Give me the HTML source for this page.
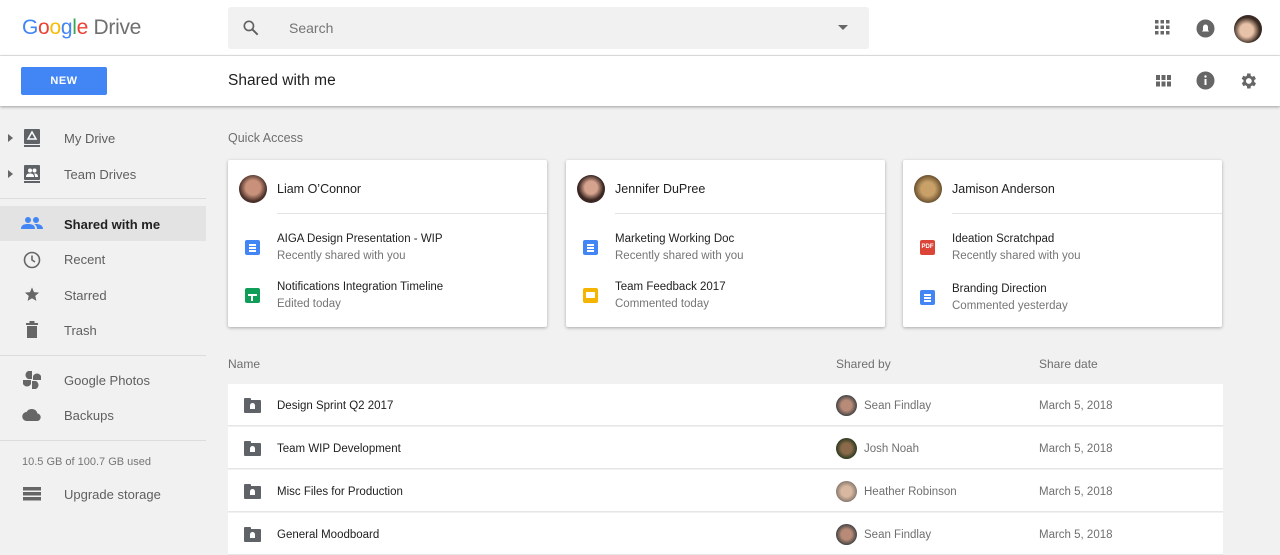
<!DOCTYPE html>
<html><head><meta charset="utf-8"><style>
*{box-sizing:border-box;margin:0;padding:0}
body{width:1280px;height:548px;overflow:hidden;background:#f1f1f1;font-family:"Liberation Sans",Arial,sans-serif;position:relative;color:#212121}
.abs{position:absolute}
.top{left:0;top:0;width:1280px;height:56px;background:#fff;border-bottom:1px solid #e6e6e6}
.sub{left:0;top:56px;width:1280px;height:50px;background:#fff;box-shadow:0 1px 3px rgba(0,0,0,.35)}
.nav{left:64px;font-size:13px;color:#5f5f5f}
.div{left:0;width:206px;height:1px;background:#dcdcdc}
.card{background:#fff;width:319px;height:167px;top:160px;box-shadow:0 1px 3px rgba(0,0,0,.3);border-radius:2px}
.card .av{position:absolute;left:11px;top:15px;width:28px;height:28px;border-radius:50%}
.card .nm{position:absolute;left:49px;top:22px;font-size:12.5px;color:#212121}
.card .ln{position:absolute;left:49px;right:0;top:53px;height:1px;background:#e3e3e3}
.card .t{position:absolute;left:49px;font-size:11.5px;color:#212121}
.card .s{position:absolute;left:49px;font-size:11.5px;color:#757575}
.card .fi{position:absolute;left:17px;width:15px;height:15px;border-radius:2px}
.doc:after{content:"";position:absolute;left:4px;top:4px;width:7px;height:1.5px;background:#fff;box-shadow:0 3px 0 #fff,0 6px 0 #fff}
.sht:after{content:"";position:absolute;left:3px;top:6px;width:9px;height:1.5px;background:#fff}
.sht:before{content:"";position:absolute;left:6px;top:6px;width:1.5px;height:7px;background:#fff}
.sld:after{content:"";position:absolute;left:3px;top:4px;width:9px;height:6px;background:#fff}
.pdf{font-size:6px;color:#fff;font-weight:bold;text-align:center;line-height:15px}
.row{left:228px;width:995px;height:42px;background:#fff;border-bottom:1px solid #e6e6e6}
.row .fn{position:absolute;left:49px;top:16px;font-size:11.5px;color:#212121}
.row .pic{position:absolute;left:608px;top:11px;width:21px;height:21px;border-radius:50%}
.row .by{position:absolute;left:636px;top:16px;font-size:11.5px;color:#6f6f6f}
.row .dt{position:absolute;left:811px;top:16px;font-size:11.5px;color:#6f6f6f}
.fold{position:absolute;left:16px;top:16px;width:17px;height:13px;background:#5f6368;border-radius:1px}
.fold:before{content:"";position:absolute;left:0;top:-2px;width:7px;height:3px;background:#5f6368;border-radius:1px 1px 0 0}
.fold:after{content:"";position:absolute;left:6px;top:3px;width:5px;height:6px;background:#fff;border-radius:2.5px 2.5px 0 0}
</style></head><body>
<div class="abs top"></div>
<div class="abs sub"></div>
<div class="abs" style="left:22px;top:16px;font-size:21px;letter-spacing:-.3px"><span style="color:#4285f4">G</span><span style="color:#ea4335">o</span><span style="color:#fbbc05">o</span><span style="color:#4285f4">g</span><span style="color:#34a853">l</span><span style="color:#ea4335">e</span> <span style="color:#6f6f6f">Drive</span></div>
<div class="abs" style="left:228px;top:7px;width:641px;height:42px;background:#f1f1f1;border-radius:3px"></div>
<svg class="abs" style="left:241px;top:18px" width="20" height="20" viewBox="0 0 24 24"><circle cx="9.5" cy="9.5" r="5.5" fill="none" stroke="#616161" stroke-width="2"/><path d="M13.5 13.5L20 20" stroke="#616161" stroke-width="2.4"/></svg>
<div class="abs" style="left:289px;top:20px;font-size:14px;color:#757575">Search</div>
<svg class="abs" style="left:837px;top:24px" width="12" height="8"><path d="M1 1h10L6 6z" fill="#666"/></svg>
<svg class="abs" style="left:1155px;top:20px" width="15" height="15"><g fill="#666"><rect x="0" y="0" width="3.5" height="3.5"/><rect x="5.5" y="0" width="3.5" height="3.5"/><rect x="11" y="0" width="3.5" height="3.5"/><rect x="0" y="5.5" width="3.5" height="3.5"/><rect x="5.5" y="5.5" width="3.5" height="3.5"/><rect x="11" y="5.5" width="3.5" height="3.5"/><rect x="0" y="11" width="3.5" height="3.5"/><rect x="5.5" y="11" width="3.5" height="3.5"/><rect x="11" y="11" width="3.5" height="3.5"/></g></svg>
<svg class="abs" style="left:1196px;top:19px" width="19" height="19"><circle cx="9.5" cy="9.5" r="9" fill="#666"/><path d="M6 12.5h7l-1-1.5V8a2.5 2.5 0 0 0-5 0v3z" fill="#fff"/></svg>
<div class="abs" style="left:1234px;top:15px;width:28px;height:28px;border-radius:50%;background:radial-gradient(circle at 45% 55%,#e8c2a8 0 30%,#3a2a22 60%);"></div>
<div class="abs" style="left:21px;top:67px;width:86px;height:28px;background:#4285f4;border-radius:2px;color:#fff;font-size:11px;font-weight:bold;text-align:center;line-height:28px;letter-spacing:.5px">NEW</div>
<div class="abs" style="left:228px;top:72px;font-size:15.5px;color:#212121">Shared with me</div>
<svg class="abs" style="left:1156px;top:75px" width="15" height="12"><g fill="#666"><rect x="0" y="0" width="4" height="5"/><rect x="5.5" y="0" width="4" height="5"/><rect x="11" y="0" width="4" height="5"/><rect x="0" y="6.5" width="4" height="5"/><rect x="5.5" y="6.5" width="4" height="5"/><rect x="11" y="6.5" width="4" height="5"/></g></svg>
<svg class="abs" style="left:1196px;top:71px" width="19" height="19"><circle cx="9.5" cy="9.5" r="9" fill="#666"/><rect x="8.5" y="8" width="2" height="6" fill="#fff"/><circle cx="9.5" cy="5.5" r="1.2" fill="#fff"/></svg>
<svg class="abs" style="left:1238px;top:71px" width="20" height="20" viewBox="0 0 24 24"><path fill="#666" d="M19.4 13a7.5 7.5 0 0 0 0-2l2.1-1.6-2-3.5-2.5 1a7 7 0 0 0-1.7-1L15 3h-4l-.4 2.7a7 7 0 0 0-1.7 1l-2.5-1-2 3.5L6.6 11a7.5 7.5 0 0 0 0 2l-2.1 1.6 2 3.5 2.5-1a7 7 0 0 0 1.7 1L11 21h4l.4-2.7a7 7 0 0 0 1.7-1l2.5 1 2-3.5zM13 15.5a3.5 3.5 0 1 1 0-7 3.5 3.5 0 0 1 0 7z"/></svg>

<svg class="abs" style="left:8px;top:134px" width="5" height="8"><path d="M0 0l5 4-5 4z" fill="#666"/></svg>
<svg class="abs" style="left:8px;top:170px" width="5" height="8"><path d="M0 0l5 4-5 4z" fill="#666"/></svg>
<svg class="abs" style="left:24px;top:129px" width="16" height="18"><rect width="16" height="15" rx="1" fill="#5f6368"/><rect y="16" width="16" height="2" fill="#5f6368"/><path d="M8 3l4 7H4z" fill="none" stroke="#fff" stroke-width="1.5"/></svg>
<svg class="abs" style="left:24px;top:165px" width="16" height="18"><rect width="16" height="15" rx="1" fill="#5f6368"/><rect y="16" width="16" height="2" fill="#5f6368"/><circle cx="6" cy="5.5" r="2" fill="#fff"/><circle cx="10.5" cy="5.5" r="2" fill="#fff"/><path d="M2 12c0-3 2-3.5 4-3.5s4 .5 4 3.5zM10.5 8.5c2 0 3.5.5 3.5 3.5h-3c0-1.5-.3-2.7-1-3.3z" fill="#fff"/></svg>
<div class="abs nav" style="top:131px">My Drive</div>
<div class="abs nav" style="top:167px">Team Drives</div>
<div class="abs div" style="top:198px"></div>
<div class="abs" style="left:0;top:206px;width:206px;height:35px;background:#e3e3e3"></div>
<svg class="abs" style="left:21px;top:216px" width="22" height="14"><g fill="#4285f4"><circle cx="7" cy="4" r="3"/><circle cx="15" cy="4" r="3"/><path d="M0 13c0-4 3-5 7-5s7 1 7 5zM15 8c3 0 7 1 7 5h-6c0-2-1-4-3-5z"/></g></svg>
<div class="abs nav" style="top:217px;color:#212121;font-weight:bold">Shared with me</div>
<svg class="abs" style="left:23px;top:251px" width="18" height="18"><circle cx="9" cy="9" r="7.5" fill="none" stroke="#666" stroke-width="1.6"/><path d="M9 4.5V9l3 2" fill="none" stroke="#666" stroke-width="1.6"/></svg>
<div class="abs nav" style="top:252px">Recent</div>
<svg class="abs" style="left:23px;top:286px" width="18" height="17" viewBox="0 0 24 24"><path fill="#666" d="M12 17.3l6.2 3.7-1.6-7 5.4-4.7-7.2-.6L12 2 9.2 8.7 2 9.3l5.4 4.7-1.6 7z"/></svg>
<div class="abs nav" style="top:288px">Starred</div>
<svg class="abs" style="left:25px;top:321px" width="14" height="17"><path d="M1 2h12v2H1zM4.5 0h5v2h-5zM2 5h10v12H2z" fill="#666"/></svg>
<div class="abs nav" style="top:323px">Trash</div>
<div class="abs div" style="top:355px"></div>
<svg class="abs" style="left:23px;top:371px" width="18" height="18" viewBox="0 0 18 18"><g fill="#666"><path d="M9 0v8H5a4 4 0 0 1 4-8z"/><path d="M18 9h-8V5a4 4 0 0 1 8 4z"/><path d="M9 18v-8h4a4 4 0 0 1-4 8z"/><path d="M0 9h8v4a4 4 0 0 1-8-4z"/></g></svg>
<div class="abs nav" style="top:373px">Google Photos</div>
<svg class="abs" style="left:22px;top:408px" width="20" height="14"><path d="M5 13a4.5 4.5 0 0 1-.5-9 6 6 0 0 1 11 1.5A3.8 3.8 0 0 1 15.5 13z" fill="#666"/></svg>
<div class="abs nav" style="top:408px">Backups</div>
<div class="abs div" style="top:440px"></div>
<div class="abs" style="left:22px;top:456px;font-size:11px;color:#757575">10.5 GB of 100.7 GB used</div>
<svg class="abs" style="left:23px;top:487px" width="18" height="14"><g fill="#666"><rect y="0" width="18" height="3.5"/><rect y="5" width="18" height="3.5"/><rect y="10" width="18" height="3.5"/></g></svg>
<div class="abs nav" style="top:487px">Upgrade storage</div>

<div class="abs" style="left:228px;top:131px;font-size:12.5px;color:#6f6f6f">Quick Access</div>

<div class="abs card" style="left:228px">
 <div class="av" style="background:radial-gradient(circle at 50% 45%,#c9917a 0 35%,#4a3028 65%)"></div>
 <div class="nm">Liam O’Connor</div><div class="ln"></div>
 <div class="fi doc" style="top:80px;background:#4285f4"></div><div class="t" style="top:73px">AIGA Design Presentation - WIP</div><div class="s" style="top:90px">Recently shared with you</div>
 <div class="fi sht" style="top:128px;background:#0f9d58"></div><div class="t" style="top:121px">Notifications Integration Timeline</div><div class="s" style="top:138px">Edited today</div>
</div>
<div class="abs card" style="left:566px">
 <div class="av" style="background:radial-gradient(circle at 50% 45%,#d6a48e 0 30%,#3a2622 60%)"></div>
 <div class="nm">Jennifer DuPree</div><div class="ln"></div>
 <div class="fi doc" style="top:80px;background:#4285f4"></div><div class="t" style="top:73px">Marketing Working Doc</div><div class="s" style="top:90px">Recently shared with you</div>
 <div class="fi sld" style="top:128px;background:#f4b400"></div><div class="t" style="top:121px">Team Feedback 2017</div><div class="s" style="top:138px">Commented today</div>
</div>
<div class="abs card" style="left:903px">
 <div class="av" style="background:radial-gradient(circle at 50% 50%,#c8a068 0 35%,#6b5230 70%)"></div>
 <div class="nm">Jamison Anderson</div><div class="ln"></div>
 <div class="fi pdf" style="top:80px;background:#db4437">PDF</div><div class="t" style="top:73px">Ideation Scratchpad</div><div class="s" style="top:90px">Recently shared with you</div>
 <div class="fi doc" style="top:130px;background:#4285f4"></div><div class="t" style="top:123px">Branding Direction</div><div class="s" style="top:140px">Commented yesterday</div>
</div>

<div class="abs" style="left:228px;top:357px;font-size:12px;color:#6f6f6f">Name</div>
<div class="abs" style="left:836px;top:357px;font-size:12px;color:#6f6f6f">Shared by</div>
<div class="abs" style="left:1039px;top:357px;font-size:12px;color:#6f6f6f">Share date</div>

<div class="abs row" style="top:384px"><div class="fold"></div><div class="fn">Design Sprint Q2 2017</div><div class="pic" style="background:radial-gradient(circle,#b88a78 0 35%,#444 70%)"></div><div class="by">Sean Findlay</div><div class="dt">March 5, 2018</div></div>
<div class="abs row" style="top:427px"><div class="fold"></div><div class="fn">Team WIP Development</div><div class="pic" style="background:radial-gradient(circle,#8a6a4a 0 35%,#2c3a20 70%)"></div><div class="by">Josh Noah</div><div class="dt">March 5, 2018</div></div>
<div class="abs row" style="top:470px"><div class="fold"></div><div class="fn">Misc Files for Production</div><div class="pic" style="background:radial-gradient(circle,#d8b8a0 0 35%,#8a7a70 70%)"></div><div class="by">Heather Robinson</div><div class="dt">March 5, 2018</div></div>
<div class="abs row" style="top:513px"><div class="fold"></div><div class="fn">General Moodboard</div><div class="pic" style="background:radial-gradient(circle,#b88a78 0 35%,#444 70%)"></div><div class="by">Sean Findlay</div><div class="dt">March 5, 2018</div></div>
</body></html>
